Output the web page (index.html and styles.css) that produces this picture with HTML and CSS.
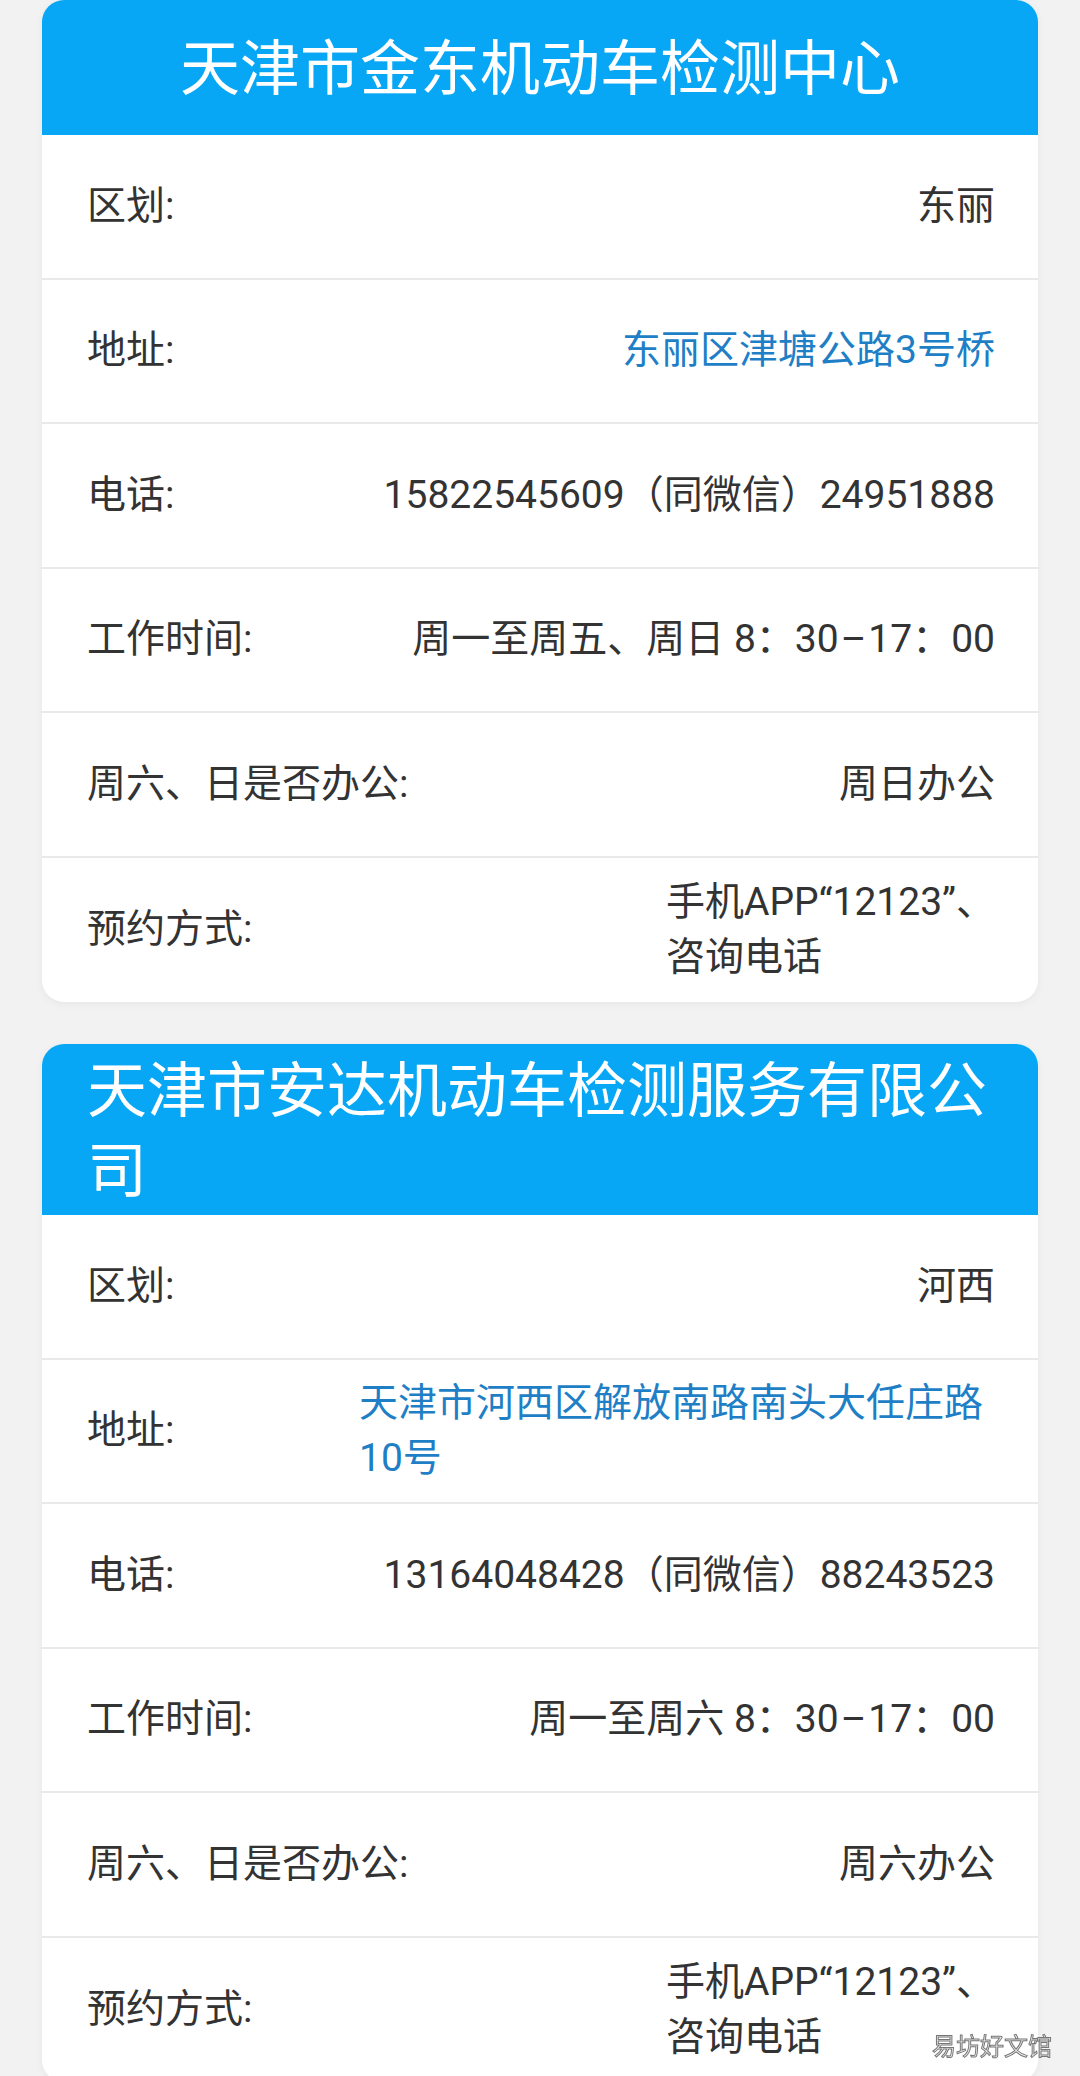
FILE: index.html
```html
<!DOCTYPE html>
<html lang="zh-CN">
<head>
    <meta charset="UTF-8">
    <meta name="viewport" content="width=device-width, initial-scale=1.0">
    <title>天津机动车检测站</title>
    <link rel="stylesheet" href="styles.css">
</head>
<body>
    <div class="page">
        <!-- 金东 -->
        <section class="card">
            <h2 class="card-head"><span>天津市金东机动车检测中心</span></h2>
            <div class="row"><span class="label">区划:</span><span class="value">东丽</span></div>
            <div class="row"><span class="label">地址:</span><span class="value link">东丽区津塘公路3号桥</span></div>
            <div class="row"><span class="label">电话:</span><span class="value">15822545609（同微信）24951888</span></div>
            <div class="row"><span class="label">工作时间:</span><span class="value">周一至周五、周日 8：30<span class="dash">–</span>17：00</span></div>
            <div class="row"><span class="label">周六、日是否办公:</span><span class="value">周日办公</span></div>
            <div class="row"><span class="label">预约方式:</span><span class="value">手机APP“12123”、<br>咨询电话</span></div>
        </section>

        <!-- 安达 -->
        <section class="card">
            <h2 class="card-head"><span>天津市安达机动车检测服务有限公司</span></h2>
            <div class="row"><span class="label">区划:</span><span class="value">河西</span></div>
            <div class="row"><span class="label">地址:</span><span class="value link">天津市河西区解放南路南头大任庄路10号</span></div>
            <div class="row"><span class="label">电话:</span><span class="value">13164048428（同微信）88243523</span></div>
            <div class="row"><span class="label">工作时间:</span><span class="value">周一至周六 8：30<span class="dash">–</span>17：00</span></div>
            <div class="row"><span class="label">周六、日是否办公:</span><span class="value">周六办公</span></div>
            <div class="row"><span class="label">预约方式:</span><span class="value">手机APP“12123”、<br>咨询电话</span></div>
        </section>
    </div>

    <div class="watermark">易坊好文馆</div>
</body>
</html>
```

FILE: styles.css
```css
/* page */
body {
    margin: 0;
    background: #f2f2f2;
    font-family: Roboto, "Noto Sans CJK SC", sans-serif;
    color: #333;
}
.page {
    padding: 0 42px;
    display: flex;
    flex-direction: column;
    gap: 42px;
}

/* card */
.card {
    background: #fff;
    border-radius: 22px;
    overflow: hidden;
    box-shadow: 0 2px 8px rgba(0, 0, 0, 0.05);
}
.card-head {
    margin: 0;
    min-height: 135px;
    box-sizing: border-box;
    padding: 8px 45px 3px;
    display: flex;
    justify-content: center;
    align-items: center;
    background: #08a7f5;
    color: #fff;
    font-size: 60px;
    font-weight: normal;
    line-height: 80px;
}

/* rows */
.row {
    display: flex;
    justify-content: space-between;
    align-items: center;
    min-height: 144.5px;
    box-sizing: border-box;
    padding: 0 43px 0 45px;
    border-bottom: 2px solid #e9e9e9;
    font-size: 39px;
    line-height: 55px;
}
.row:last-child {
    border-bottom: none;
}
.label {
    flex: none;
}
.value {
    max-width: 636px;
    text-align: left;
}
.link {
    color: #1f7fc6;
}
.dash {
    padding: 0 2px;
}

/* watermark */
.watermark {
    position: fixed;
    right: 28px;
    bottom: 14px;
    font-size: 24px;
    color: #eee;
    -webkit-text-stroke: 1px #777;
    font-family: "Noto Sans CJK SC", sans-serif;
}
```
